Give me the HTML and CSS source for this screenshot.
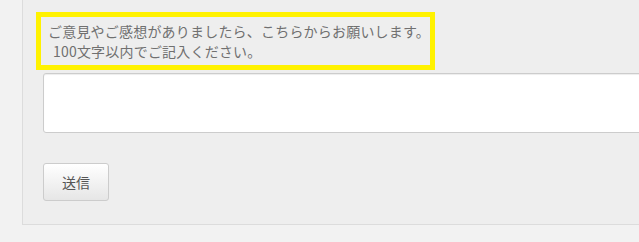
FILE: index.html
```html
<!DOCTYPE html>
<html lang="ja">
<head>
<meta charset="utf-8">
<title>ご意見フォーム</title>
<link rel="stylesheet" href="styles.css">
</head>
<body>
<div class="panel">
  <form class="feedback">
    <label class="note" for="msg">ご意見やご感想がありましたら、こちらからお願いします。<br><span class="indent">100文字以内でご記入ください。</span></label>
    <textarea id="msg" class="field" maxlength="100"></textarea>
    <button type="button" class="send">送信</button>
  </form>
</div>
</body>
</html>
```

FILE: styles.css
```css
html, body {
  margin: 0;
  padding: 0;
  background: #f2f2f2;
  overflow: hidden;
}
body {
  font-family: "Noto Sans CJK JP", "Noto Sans", sans-serif;
  color: #666;
  font-size: 14px;
}
.panel {
  margin-left: 22px;
  width: 700px;
  background: #eeeeee;
  border: 1px solid #dcdcdc;
  border-top: 0;
  border-right: 0;
  padding: 12px 0 23px 0;
}
.feedback {
  display: flex;
  flex-direction: column;
  align-items: flex-start;
}
.note {
  display: block;
  box-sizing: border-box;
  margin-left: 13px;
  width: 399px;
  height: 58px;
  border: 5px solid #fff200;
  padding: 4px 6px 4px 7px;
  line-height: 20px;
  font-size: 14px;
  letter-spacing: 0.2px;
  color: #707070;
  white-space: nowrap;
}
.indent {
  padding-left: 5px;
}
.field {
  display: block;
  box-sizing: border-box;
  margin: 3px 0 0 20px;
  width: 640px;
  height: 60px;
  border: 1px solid #cccccc;
  border-radius: 3px;
  background: #fff;
  box-shadow: inset 0 1px 1px rgba(0,0,0,0.075);
  resize: none;
  padding: 4px 6px;
  font: inherit;
}
.send {
  display: flex;
  align-items: center;
  justify-content: center;
  box-sizing: border-box;
  margin: 30px 0 0 20px;
  width: 66px;
  height: 38px;
  padding: 0;
  border: 1px solid #cccccc;
  border-radius: 3px;
  background: linear-gradient(#ffffff, #e6e6e6);
  font-family: "Noto Sans CJK JP", sans-serif;
  font-size: 14px;
  color: #555;
}
```
